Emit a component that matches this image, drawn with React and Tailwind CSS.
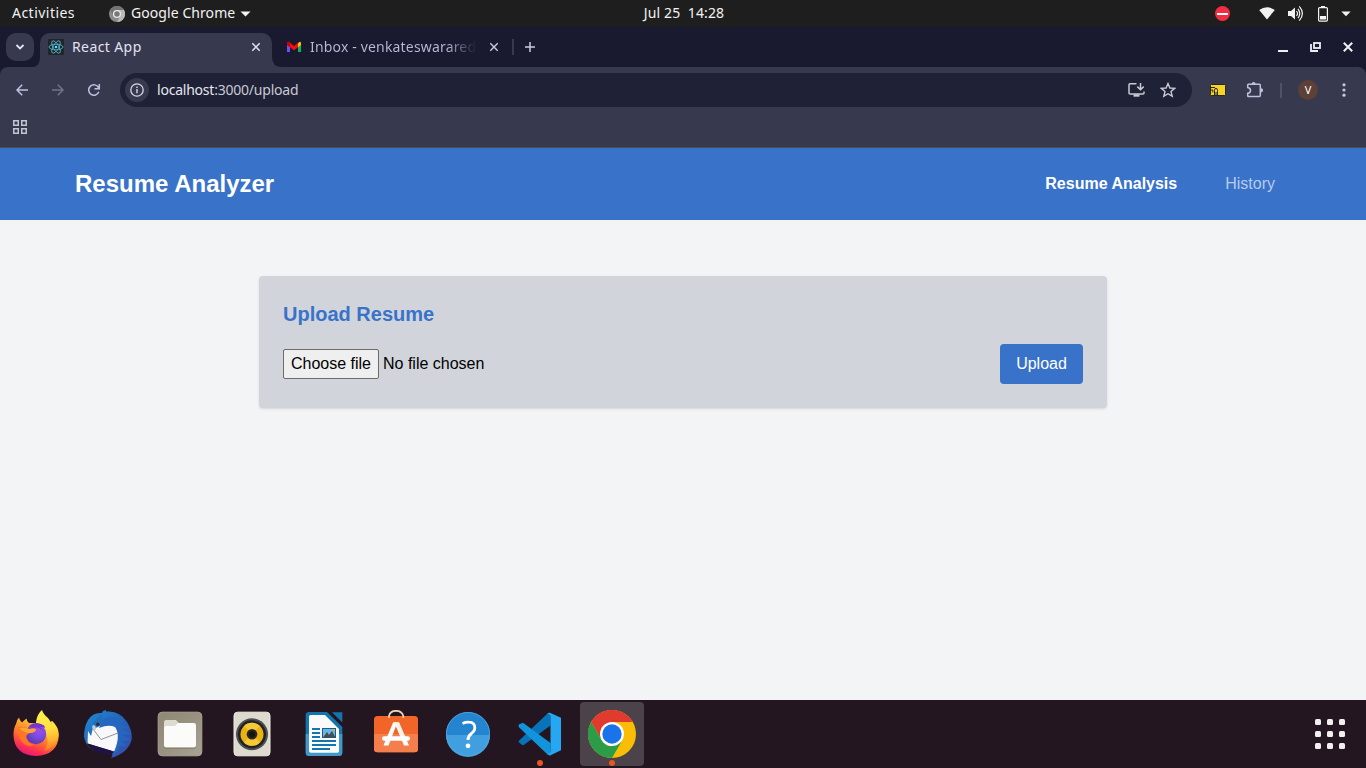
import React from "react";

const ui = "font-['Noto_Sans',sans-serif]";

function TopBar() {
  return (
    <div className={`flex h-[27px] items-center bg-[#1e1e1e] text-[14px] leading-[25px] text-[#f2f2f2] ${ui}`}>
      <div className="flex w-[536px] items-center pl-3">
        <span className="w-[97px] pb-[2px] tracking-[0.47px]">Activities</span>
        <svg className="h-4 w-4 shrink-0" viewBox="0 0 16 16">
          <circle cx="8" cy="8" r="8" fill="#8b8b8b" />
          <path d="M8 4H15A8 8 0 0 1 8 16L11.5 10Z" fill="#b9b9b9" />
          <path d="M1.2 4A8 8 0 0 1 15 4H8L4.5 10Z" fill="#747474" />
          <circle cx="8" cy="8" r="4.1" fill="#e8e8e8" />
          <circle cx="8" cy="8" r="2.7" fill="#777" />
        </svg>
        <span className="ml-[6px] w-[105px] whitespace-nowrap pb-[2px] tracking-[0.07px]">Google Chrome</span>
        <svg className="ml-[4px] h-[6px] w-[11px]" viewBox="0 0 11 6"><path d="M0.5 0.5H10.5L5.5 5.5Z" fill="#f2f2f2" /></svg>
      </div>
      <div className="flex w-[296px] justify-center whitespace-pre pb-[2px] tracking-[0.13px]">Jul 25  14:28</div>
      <svg className="ml-[383px] h-4 w-4 shrink-0" viewBox="0 0 16 16">
        <circle cx="7.5" cy="7.5" r="7.5" fill="#f22c42" />
        <rect x="2" y="7" width="11" height="2" fill="#fff" />
      </svg>
      <svg className="ml-7 h-[18px] w-[16px] shrink-0" viewBox="0 0 16 18"><path d="M0.2 5Q8 -0.3 15.8 5L8 14.5Z" fill="#f2f2f2" /></svg>
      <svg className="ml-[12px] h-[18px] w-[18px] shrink-0" viewBox="0 0 18 18" fill="none" stroke="#f2f2f2" strokeWidth="1.2">
        <path d="M1 6H4L8 2.5V14.5L4 11H1Z" fill="#f2f2f2" stroke="none" />
        <path d="M9.5 6Q11.5 8.5 9.5 11M11 3.8Q14.5 8.5 11 13.2M12.3 1.4Q18.5 8.5 12.3 15.6" />
      </svg>
      <svg className="ml-[13px] h-[16px] w-[10px] shrink-0" viewBox="0 0 10 16">
        <path d="M3 0H7V2H3Z" fill="#f2f2f2" />
        <rect x="0.6" y="1.6" width="8.8" height="13.5" rx="1" fill="none" stroke="#f2f2f2" strokeWidth="1.2" />
        <rect x="2" y="10" width="6" height="3.5" fill="#f2f2f2" />
      </svg>
      <svg className="ml-[13px] h-[6px] w-[10px] shrink-0" viewBox="0 0 10 6"><path d="M0.3 0.5H9.7L5 5.3Z" fill="#f2f2f2" /></svg>
    </div>
  );
}

function ReactIcon() {
  return (
    <svg className="h-4 w-4 shrink-0" viewBox="0 0 16 16" fill="none" stroke="#4fbfdc" strokeWidth="0.8">
      <rect width="16" height="16" rx="1" fill="#222527" stroke="none" />
      <ellipse cx="8" cy="8" rx="7" ry="2.8" />
      <ellipse cx="8" cy="8" rx="7" ry="2.8" transform="rotate(60 8 8)" />
      <ellipse cx="8" cy="8" rx="7" ry="2.8" transform="rotate(120 8 8)" />
      <circle cx="8" cy="8" r="1.3" fill="#61dafb" stroke="none" />
    </svg>
  );
}

function GmailIcon() {
  return (
    <svg className="h-4 w-4 shrink-0" viewBox="0 0 16 16">
      <path d="M1 4.5V13H4V7Z" fill="#6257f5" />
      <path d="M12 7L15 4.5V13H12Z" fill="#09b45a" />
      <path d="M12 4.3L13 3.3Q15 2 15 4.5V6L12 8.2Z" fill="#fbc60a" />
      <path d="M1 6V4.3Q1.1 1.9 3.2 3.1L8 7L12 3.8V8.2L8 11.2Z" fill="#f50d12" />
      <path d="M1 6V4.3Q1.1 2.3 3 3L4 3.8V8.2Z" fill="#c8000c" />
    </svg>
  );
}

function Cross({ color, width }) {
  return (
    <svg className="h-[10px] w-[10px] shrink-0" viewBox="0 0 10 10"><path d="M1.3 1.3L8.7 8.7M8.7 1.3L1.3 8.7" stroke={color} strokeWidth={width} /></svg>
  );
}

function TabStrip() {
  return (
    <div className={`flex h-10 items-end bg-[#191a2f] text-[14px] ${ui}`}>
      <div className="mb-[6px] ml-[6px] flex h-7 w-7 items-center justify-center rounded-[10px] bg-[#37394f]">
        <svg className="h-[10px] w-[10px]" viewBox="0 0 10 10"><path d="M1.5 3L5 6.5L8.5 3" fill="none" stroke="#e4e4f0" strokeWidth="1.8" /></svg>
      </div>
      <svg className="h-[10px] w-[6px]" viewBox="0 0 6 10"><path d="M6 0V10H0Q6 8 6 0Z" fill="#37394f" /></svg>
      <div className="flex h-[34px] w-[232px] items-center rounded-t-[10px] bg-[#37394f] pb-[6px] pl-2 text-[#e2e2f2]">
        <ReactIcon />
        <span className="ml-2 w-[179px] pb-[2px] tracking-[0.4px]">React App</span>
        <Cross color="#e4e4f0" width="1.5" />
      </div>
      <svg className="h-[10px] w-[10px]" viewBox="0 0 10 10"><path d="M0 0V10H10Q0 10 0 0Z" fill="#37394f" /></svg>
      <div className="flex h-[34px] items-center pb-[6px] pl-1 text-[#b9bada]">
        <GmailIcon />
        <span className="ml-2 w-[167px] whitespace-nowrap bg-gradient-to-r from-[#b9bada] from-[82%] to-[#191a2f] bg-clip-text pb-[2px] tracking-[0.17px] text-transparent">Inbox - venkateswarared</span>
        <span className="ml-3"><Cross color="#c9cae6" width="1.4" /></span>
        <span className="ml-[13px] h-4 w-[2px] bg-[#37394f]" />
        <svg className="ml-[10px] h-3 w-3" viewBox="0 0 12 12"><path d="M6 1V11M1 6H11" stroke="#c9cae6" strokeWidth="1.5" /></svg>
      </div>
      <div className="mb-[14px] ml-auto flex items-center pr-[13px]">
        <svg className="h-3 w-[10px]" viewBox="0 0 10 12"><path d="M0 10H10" stroke="#eeeef5" strokeWidth="2" /></svg>
        <svg className="ml-[22px] h-3 w-3" viewBox="0 0 12 12" fill="none" stroke="#eeeef5"><rect x="4" y="2" width="6" height="5" strokeWidth="1.8" /><path d="M1 3V10H8" strokeWidth="1.8" /></svg>
        <svg className="ml-[21px] h-[10px] w-[10px]" viewBox="0 0 10 10"><path d="M0.8 0.8L9.2 9.2M9.2 0.8L0.8 9.2" stroke="#eeeef5" strokeWidth="2" /></svg>
      </div>
    </div>
  );
}

function Toolbar() {
  return (
    <div className="bg-[#191a2f]">
      <div className={`h-[81px] rounded-t-[8px] border-b border-[#4b4b58] bg-[#37394f] ${ui}`}>
        <div className="flex h-[46px] items-center">
          <svg className="ml-4 h-3 w-3" viewBox="0 0 12 12"><path d="M12 6H1M6.2 0.8L1 6L6.2 11.2" fill="none" stroke="#bfc0df" strokeWidth="1.5" /></svg>
          <svg className="ml-6 h-3 w-3" viewBox="0 0 12 12"><path d="M0 6H11M5.8 0.8L11 6L5.8 11.2" fill="none" stroke="#737489" strokeWidth="1.5" /></svg>
          <svg className="ml-[23px] h-[14px] w-[14px]" viewBox="0 0 14 14"><path d="M11.8 8.7A5.2 5.2 0 1 1 11.5 4.6L12.2 5.5M12.3 1V5.8H7.5" fill="none" stroke="#bfc0df" strokeWidth="1.5" /></svg>
          <div className="ml-[19px] flex h-[34px] w-[1072px] items-center rounded-full bg-[#1f2136] pl-[5px] text-[14px] text-[#c8c9d3]">
            <span className="flex h-6 w-6 items-center justify-center rounded-full bg-[#37394f]">
              <svg className="h-[14px] w-[14px]" viewBox="0 0 14 14"><circle cx="7" cy="7" r="6.2" fill="none" stroke="#d8d8e4" strokeWidth="1.3" /><path d="M7 6V10.3M7 3.6V5" stroke="#d8d8e4" strokeWidth="1.4" /></svg>
            </span>
            <span className="ml-2 pb-[2px] tracking-[-0.22px]"><span className="text-[#e6e6f0]">localhost</span>:3000/upload</span>
            <svg className="ml-auto h-4 w-[17px]" viewBox="0 0 17 16" fill="none" stroke="#c9c9d1" strokeWidth="1.5"><path d="M8.5 1.8H2Q1 1.8 1 2.8V11Q1 12 2 12H15Q16 12 16 11V9.5M12.5 1V7M9.3 4.6L12.5 7.8L15.7 4.6" /><path d="M5.5 13.5H11.5" strokeWidth="2.4" /></svg>
            <svg className="ml-[15px] mr-4 h-4 w-4" viewBox="0 0 16 16"><path d="M8 1.5L9.9 6L14.7 6.4L11 9.5L12.2 14.2L8 11.7L3.8 14.2L5 9.5L1.3 6.4L6.1 6Z" fill="none" stroke="#c9c9d1" strokeWidth="1.4" /></svg>
          </div>
          <svg className="ml-[18px] h-3 w-4" viewBox="0 0 16 12"><rect x="0.5" y="0.5" width="15" height="11" rx="1" fill="#f5d329" stroke="#292817" /><path d="M1 3.5H5M4.5 11V6.5Q4.5 4.3 6 4.3T7.5 6.5V11M1 6H2.8V8.5M6 11V8" fill="none" stroke="#292817" strokeWidth="1" /></svg>
          <svg className="ml-5 h-[18px] w-[18px]" viewBox="0 0 18 18"><path d="M2.5 3.2H13.3Q14.3 3.2 14.3 4.2V14.6Q14.3 15.6 13.3 15.6H2.5Q1.7 15.6 1.7 14.8V12.3Q4.5 11.8 4.5 9.4T1.7 6.5V4Q1.7 3.2 2.5 3.2Z" fill="none" stroke="#bfc0df" strokeWidth="1.5" /><path d="M5.6 3.4V3A2 2 0 0 1 9.6 3V3.4ZM14 7.2H15A2.1 2.1 0 0 1 15 11.4H14Z" fill="#bfc0df" /></svg>
          <span className="ml-4 h-[15px] w-[2px] bg-[#505269]" />
          <span className="ml-4 flex h-5 w-5 items-center justify-center rounded-full bg-[#5d4037] text-[11px] leading-5 text-white">V</span>
          <svg className="ml-[24px] h-[14px] w-1" viewBox="0 0 4 14" fill="#c4c5e0"><circle cx="2" cy="1.8" r="1.6" /><circle cx="2" cy="7" r="1.6" /><circle cx="2" cy="12.2" r="1.6" /></svg>
        </div>
        <svg className="ml-[13px] mt-[7px] block h-[14px] w-[14px]" viewBox="0 0 14 14" fill="none" stroke="#c5c5cf" strokeWidth="1.5">
          <rect x="0.75" y="0.75" width="4.5" height="4.5" /><rect x="8.75" y="0.75" width="4.5" height="4.5" />
          <rect x="0.75" y="8.75" width="4.5" height="4.5" /><rect x="8.75" y="8.75" width="4.5" height="4.5" />
        </svg>
      </div>
    </div>
  );
}

function Page() {
  return (
    <div className="h-[552px] bg-[#f3f4f6] font-['Liberation_Sans',sans-serif]">
      <nav className="flex h-[72px] items-center bg-[#3972c9] pl-[75px] pr-[91px] text-white">
        <h1 className="text-2xl font-bold">Resume Analyzer</h1>
        <a className="ml-auto font-bold">Resume Analysis</a>
        <a className="ml-12 text-[#b8cbea]">History</a>
      </nav>
      <main className="mx-auto mt-14 h-[132px] w-[848px] rounded bg-[#d1d5db] p-6 shadow">
        <h2 className="text-xl font-bold text-[#3972c9]">Upload Resume</h2>
        <div className="mt-4 flex items-center text-black">
          <button className="h-[30px] w-24 whitespace-nowrap rounded-[2px] border border-[#6b6b6b] bg-[#efefef]">Choose file</button>
          <span className="ml-1">No file chosen</span>
          <button className="ml-auto h-10 w-[83px] rounded bg-[#3972c9] text-white">Upload</button>
        </div>
      </main>
    </div>
  );
}

const icon = "block h-12 w-12";

function Firefox() {
  return (
    <svg className={icon} viewBox="0 0 48 48">
      <defs>
        <linearGradient id="ff1" x1="0.75" y1="0.1" x2="0.3" y2="1"><stop offset="0" stopColor="#ffd83a" /><stop offset="0.35" stopColor="#ff982b" /><stop offset="0.6" stopColor="#ff6333" /><stop offset="0.82" stopColor="#fb2c55" /><stop offset="1" stopColor="#e31587" /></linearGradient>
        <linearGradient id="ff2" x1="0.4" y1="0" x2="0.5" y2="1"><stop offset="0" stopColor="#fff44f" /><stop offset="0.45" stopColor="#ffe141" /><stop offset="0.75" stopColor="#ffb32d" /><stop offset="1" stopColor="#ff7430" /></linearGradient>
        <radialGradient id="ff3" cx="0.65" cy="0.3" r="0.75"><stop offset="0" stopColor="#a34bf0" /><stop offset="0.5" stopColor="#7a4be0" /><stop offset="1" stopColor="#583aa8" /></radialGradient>
      </defs>
      <path d="M7 7.5Q7.5 10.5 10 12.5Q12 10.5 14.5 8.5Q14.5 11 17 13H36L40 11Q46.8 17 46.8 25Q46 45 24 46Q2 45 1.5 25Q1.5 18 4 14Q4.5 10 7 7.5Z" fill="url(#ff1)" />
      <path d="M24 12Q25 4 30 0Q31 4 36 8Q39 11 39 16Q41 14 40 11Q46.5 17 46.5 26Q44 38 32 41Q38 33 34 24Q32 17 24 14Z" fill="url(#ff2)" />
      <circle cx="24" cy="24" r="10.2" fill="url(#ff3)" />
      <path d="M17 16Q22 11 29 14Q33 15 33 18Q30 16.5 28 17Q31 19 32 22Q27 16 21 18Z" fill="#7735cc" />
      <path d="M6 17Q12 16 17 19Q23 18 24 19.5Q24 22 18 23Q14 24 14 28Q16 34 23 35Q15 38 10 32Q5 26 6 17Z" fill="#ff7629" />
      <path d="M7 18Q13 16.5 17 19Q23 18 24 19.5Q24 22 18 23Q12 23 7 18Z" fill="#ffa32c" />
    </svg>
  );
}

function Thunderbird() {
  return (
    <svg className={icon} viewBox="0 0 48 48">
      <defs><linearGradient id="tb1" x1="0" y1="0" x2="1" y2="1"><stop offset="0" stopColor="#1e8bd1" /><stop offset="0.55" stopColor="#2361bc" /><stop offset="1" stopColor="#3b4ba9" /></linearGradient></defs>
      <path d="M4 10Q9 2 18 3Q18 1 22 0Q21 2 24 1.5Q36 1 43 12Q49 22 47.5 30Q44 43 27 48Q30 44 27 43L28 24L15 16Q10 17 7 26Q4 29 3 34Q5 39 13 42Q3 40 0 27Q0 17 4 10Z" fill="url(#tb1)" />
      <path d="M4 21L7 26L9 18L20 14L32 16.5L35 20L35 32L32 42L3.5 33.5Z" fill="#f8f8fa" />
      <path d="M9 19L17 29.5L34 23" fill="none" stroke="#929299" strokeWidth="1" />
      <path d="M3.5 33.5L31 42L27 44H19L9 40Q5 37 3.5 33.5Z" fill="#211246" />
      <path d="M18 11Q25 3 40 11L37 14L45 18L37 19L47 24L37 25L47.5 30L37 31L43 36L35 36Q34 42 28 46Q38 26 31 17Q25 14 15 18Z" fill="#2766be" />
      <path d="M9 14Q13 7 19 4Q17 9 20 11Q16 18 10 18Z" fill="#1d6fbd" />
      <path d="M9 15Q12 15 12 19L10 22L8 17Z" fill="#c6cace" />
      <circle cx="13.8" cy="14.2" r="1.7" fill="#47231f" />
    </svg>
  );
}

function Files() {
  return (
    <svg className={icon} viewBox="0 0 48 48">
      <defs><linearGradient id="fi" x1="0" y1="0" x2="1" y2="1"><stop offset="0" stopColor="#8e8776" /><stop offset="0.5" stopColor="#999280" /><stop offset="1" stopColor="#a9a396" /></linearGradient></defs>
      <rect x="2.2" y="2.2" width="43.6" height="43.6" rx="4" fill="url(#fi)" stroke="#aaa594" />
      <path d="M8 12Q8 10 10 10H20L23 13H38Q40 13 40 15V36Q40 38.5 38 38.5H10Q8 38.5 8 36Z" fill="#777162" />
      <path d="M8 12Q8 10 10 10H20L23 13H35V20H8Z" fill="#dedbd1" />
      <path d="M8 18Q8 16 10 16H19L22 13H38Q40 13 40 15V35.5Q40 37.5 38 37.5H10Q8 37.5 8 35.5Z" fill="#fbfbfa" />
    </svg>
  );
}

function Rhythmbox() {
  return (
    <svg className={icon} viewBox="0 0 48 48">
      <rect x="6" y="2.2" width="36" height="43.6" rx="3.5" fill="#dedace" stroke="#eeece5" />
      <circle cx="24" cy="24.3" r="16" fill="#4c5055" /><circle cx="24" cy="24.3" r="14" fill="#202225" />
      <circle cx="24" cy="24.3" r="11.5" fill="#e9b313" /><path d="M16 16A11.5 11.5 0 0 1 32 16L24 24Z" fill="#f4ca36" /><path d="M16 32.5A11.5 11.5 0 0 0 32 32.5L24 24Z" fill="#f4ca36" />
      <circle cx="24" cy="24.3" r="5.3" fill="#292724" /><circle cx="24" cy="24.3" r="3" fill="#161514" />
    </svg>
  );
}

function Writer() {
  return (
    <svg className={icon} viewBox="0 0 48 48">
      <path d="M9 2H27L42.3 17V42.5Q42.3 46 39 46H9Q5.7 46 5.7 42.5V5Q5.7 2 9 2Z" fill="#1375ad" />
      <path d="M5.7 24H42.3V42.5Q42.3 46 39 46H9Q5.7 46 5.7 42.5Z" fill="#4298c9" />
      <path d="M10.5 5H25L39 19V41Q39 42.7 37.5 42.7H11Q9 42.7 9 41V6.5Q9 5 10.5 5Z" fill="#fafafa" />
      <path d="M32 2.2H42.3V12.5Z" fill="#1375ad" />
      <path d="M12 19H20M12 23H20M12 27H20M12 31H36M12 35H36M12 39H30" stroke="#1375ad" strokeWidth="2" />
      <rect x="22.5" y="18.5" width="13" height="9" fill="#68b8e5" stroke="#145f8d" /><path d="M23 27.5L27 22L29 25L32 21L35.5 27.5Z" fill="#494d50" /><path d="M32 19H35V21.5Z" fill="#f5ae25" />
    </svg>
  );
}

function Software() {
  return (
    <svg className={icon} viewBox="0 0 48 48">
      <rect x="2" y="6" width="44" height="36.3" rx="3.5" fill="#f16529" /><path d="M2 24H46V39Q46 42.3 42.5 42.3H5.5Q2 42.3 2 39Z" fill="#f47e4c" />
      <path d="M17 8V6Q18 0.8 24 0.8T31.3 6V8" fill="none" stroke="#f4d7ae" strokeWidth="1.7" />
      <path d="M21.2 12.3H27L37 35.5H32L24 16L16.5 35.5H11.5Z" fill="#fff" />
      <path d="M22 12.3H26.8L34.5 30H29.8L23.8 16Z" fill="#fff0e8" />
      <rect x="10" y="26.3" width="28" height="4.5" rx="2.2" fill="#fff" />
    </svg>
  );
}

function Help() {
  return (
    <svg className={icon} viewBox="0 0 48 48">
      <circle cx="24" cy="24" r="22" fill="#2484d0" /><path d="M2 25A22 22 0 0 0 46 25Z" fill="#429fdf" />
      <circle cx="24" cy="24" r="21.6" fill="none" stroke="#54a9df" strokeWidth="0.8" />
      <path d="M18.5 13.5Q22 12 25 12.2Q31 12.3 30.8 18Q30.8 21 27.5 23.5Q24 26 24 30" fill="none" stroke="#fff" strokeWidth="2.8" /><circle cx="24" cy="35.8" r="2.4" fill="#fff" />
    </svg>
  );
}

function Code() {
  return (
    <svg className={icon} viewBox="0 0 48 48">
      <path d="M2.7 31L31 4Q32 2.4 34.5 3V15.5L7 35.4L2.7 32.3Z" fill="#0873b9" />
      <path d="M2.7 14.6L7 12.8L34.5 33V45.4Q32 45.5 30.5 43.5L2.7 17Z" fill="#1194db" />
      <path d="M34.5 3L45 7.8V40.2L34.5 45.3Q33.5 45.6 31.5 44Q34.5 44 34.5 41V7Q34.5 3.7 31.5 4Q33 2.4 34.5 3Z" fill="#26a7f2" />
    </svg>
  );
}

function Chrome() {
  return (
    <svg className={icon} viewBox="0 0 48 48">
      <circle cx="24" cy="24" r="24" fill="#fbbc05" />
      <path d="M3.2 12A24 24 0 0 1 44.8 12H24L13.6 30Z" fill="#e13b30" />
      <path d="M3.2 12L13.6 30Q18 37 24 36L34.4 30L24 48A24 24 0 0 1 3.2 12Z" fill="#2b9c48" />
      <circle cx="24" cy="24" r="12" fill="#fff" /><circle cx="24" cy="24" r="9.7" fill="#1a73e8" />
    </svg>
  );
}

const apps = [
  { id: "firefox", Icon: Firefox },
  { id: "thunderbird", Icon: Thunderbird },
  { id: "files", Icon: Files },
  { id: "rhythmbox", Icon: Rhythmbox },
  { id: "writer", Icon: Writer },
  { id: "software", Icon: Software },
  { id: "help", Icon: Help },
  { id: "code", Icon: Code, running: true },
  { id: "chrome", Icon: Chrome, running: true, active: true },
];

function Dock() {
  return (
    <div className="flex h-[68px] items-center gap-2 bg-[#241621] pl-1">
      {apps.map(({ id, Icon, running, active }) => (
        <div key={id} className={`relative flex h-16 w-16 items-center justify-center rounded ${active ? "bg-[#4c4249]" : ""}`}>
          <Icon />
          {running && <span className="absolute bottom-0 left-[29px] h-[6px] w-[6px] rounded-full bg-[#e95420]" />}
        </div>
      ))}
      <div className="ml-auto mr-[21px] grid grid-cols-3 gap-[6px]">
        {Array.from({ length: 9 }, (_, i) => <span key={i} className="h-[6px] w-[6px] rounded-[1.5px] bg-[#f2f0ef]" />)}
      </div>
    </div>
  );
}

export default function App() {
  return (
    <div className="h-[768px] w-[1366px] overflow-hidden">
      <TopBar />
      <TabStrip />
      <Toolbar />
      <Page />
      <Dock />
    </div>
  );
}
